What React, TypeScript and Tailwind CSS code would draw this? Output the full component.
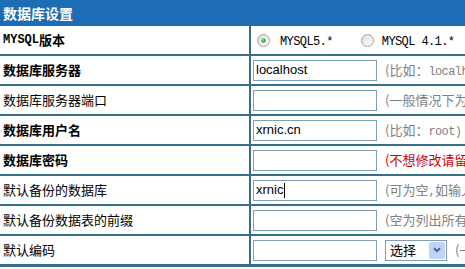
import React from "react";

const cjk = '"Noto Sans CJK SC", "Noto Sans", sans-serif';
const mono = '"Liberation Mono", "Noto Sans CJK SC", monospace';

// 半角字符用等宽字体，模仿宋体的点阵效果
function M({ children, bold }: { children: React.ReactNode; bold?: boolean }) {
  return (
    <span
      className={`text-[12px] ${bold ? "font-bold" : "tracking-[-0.6px]"}`}
      style={{ fontFamily: mono }}
    >
      {children}
    </span>
  );
}

function Radio({ checked }: { checked?: boolean }) {
  return (
    <svg width="13" height="13" viewBox="0 0 13 13" className="shrink-0">
      <defs>
        <linearGradient id="rg" x1="0" y1="0" x2="1" y2="1">
          <stop offset="0" stopColor="#dcdcd7" />
          <stop offset="1" stopColor="#ffffff" />
        </linearGradient>
      </defs>
      <circle cx="6.5" cy="6.5" r="6" fill="url(#rg)" stroke="#a1a1a1" />
      {checked && <circle cx="6.5" cy="6.5" r="2.3" fill="#3cae3c" />}
      {checked && <circle cx="6" cy="6" r="0.9" fill="#9be09b" />}
    </svg>
  );
}

function Input({ value, caret }: { value?: string; caret?: boolean }) {
  return (
    <div
      className="flex h-[21px] w-[124px] shrink-0 items-center border border-[#7f9db9] bg-white px-[2px] text-[13px] text-black"
      style={{ fontFamily: '"Liberation Sans", sans-serif' }}
    >
      {value}
      {caret && <span className="ml-[1px] inline-block h-[15px] w-px bg-black" />}
    </div>
  );
}

function Hint({ children, red }: { children: React.ReactNode; red?: boolean }) {
  return (
    <span
      className={`ml-[8px] whitespace-nowrap text-[13px] ${red ? "text-[#d00000]" : "text-[#808080]"}`}
      style={{ fontFamily: cjk }}
    >
      {children}
    </span>
  );
}

type Row = { label: React.ReactNode; bold?: boolean; body: React.ReactNode };

const rows: Row[] = [
  {
    label: (
      <>
        <M bold>MYSQL</M>版本
      </>
    ),
    bold: true,
    body: (
      <div className="flex items-center text-[13px] text-black">
        <span className="ml-[4px]">
          <Radio checked />
        </span>
        <span className="ml-[10px]">
          <M>MYSQL5.*</M>
        </span>
        <span className="ml-[28px]">
          <Radio />
        </span>
        <span className="ml-[8px]">
          <M>MYSQL 4.1.*</M>
        </span>
      </div>
    ),
  },
  {
    label: "数据库服务器",
    bold: true,
    body: (
      <>
        <Input value="localhost" />
        <Hint>
          (比如：<M>localhost)</M>
        </Hint>
      </>
    ),
  },
  {
    label: "数据库服务器端口",
    body: (
      <>
        <Input />
        <Hint>
          (一般情况下为<M>3306)</M>
        </Hint>
      </>
    ),
  },
  {
    label: "数据库用户名",
    bold: true,
    body: (
      <>
        <Input value="xrnic.cn" />
        <Hint>
          (比如：<M>root)</M>
        </Hint>
      </>
    ),
  },
  {
    label: "数据库密码",
    bold: true,
    body: (
      <>
        <Input />
        <Hint red>(不想修改请留空)</Hint>
      </>
    ),
  },
  {
    label: "默认备份的数据库",
    body: (
      <>
        <Input value="xrnic" caret />
        <Hint>
          (可为空<M>,</M>如输入则备份该数据库)
        </Hint>
      </>
    ),
  },
  {
    label: "默认备份数据表的前缀",
    body: (
      <>
        <Input />
        <Hint>(空为列出所有数据表)</Hint>
      </>
    ),
  },
  {
    label: "默认编码",
    body: (
      <>
        <Input />
        <div className="ml-[8px] flex h-[21px] w-[62px] shrink-0 items-center border border-[#7f9db9] bg-white">
          <span className="flex-1 pl-[4px] text-[13px] text-black" style={{ fontFamily: cjk }}>
            选择
          </span>
          <span className="mr-px flex h-[17px] w-[16px] items-center justify-center rounded-[2px] bg-[#c1d3fb]">
            <svg width="8" height="6" viewBox="0 0 8 6">
              <path d="M1 1.2 L4 4.2 L7 1.2" fill="none" stroke="#4d6185" strokeWidth="2" />
            </svg>
          </span>
        </div>
        <Hint>
          (一般为<M>utf8)</M>
        </Hint>
      </>
    ),
  },
];

export default function App() {
  return (
    <div className="h-[269px] w-[465px] overflow-hidden bg-white" style={{ fontFamily: cjk }}>
      <div className="flex h-[26px] items-center bg-[#1e6db4] pl-[3px] text-[14px] font-bold text-white">
        数据库设置
      </div>
      {rows.map((r, i) => (
        <div
          key={i}
          className={`grid grid-cols-[249px_1fr] border-[#356f8a] ${
            i === rows.length - 1 ? "h-[31px] border-b-[3px]" : "h-[30px] border-b-2"
          }`}
        >
          <div
            className={`flex items-center pl-[3px] text-[13px] text-black ${r.bold ? "font-bold" : ""}`}
          >
            {r.label}
          </div>
          <div className="flex items-center overflow-hidden border-l-2 border-[#356f8a] pl-[2px]">
            {r.body}
          </div>
        </div>
      ))}
    </div>
  );
}
